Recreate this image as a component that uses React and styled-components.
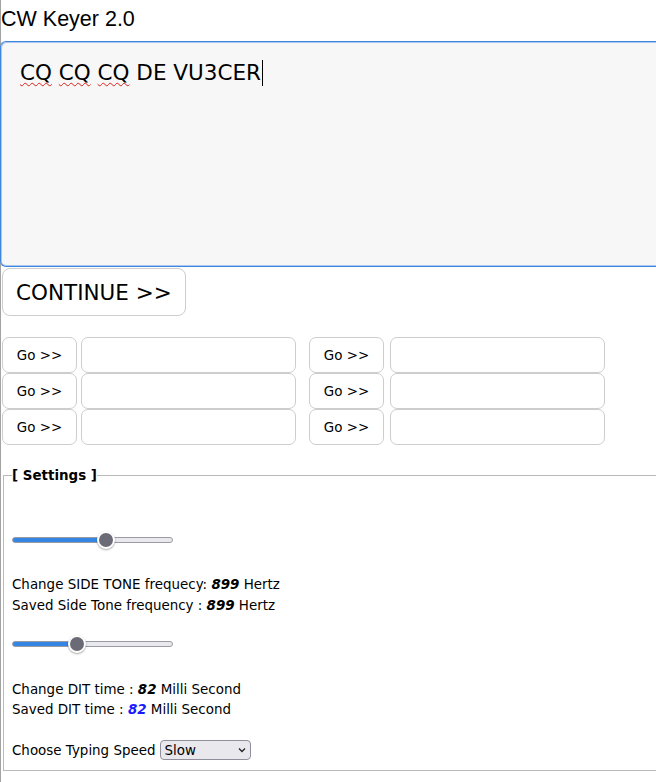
import React from "react";
import styled, { createGlobalStyle } from "styled-components";

const GlobalStyle = createGlobalStyle`
  html, body { margin: 0; padding: 0; background: #fff; overflow: hidden; }
  body { font-family: "DejaVu Sans", Verdana, sans-serif; color: #000; }
`;

const Page = styled.div`
  width: 656px;
  min-height: 782px;
  border-left: 1px solid #a3a3a3;
  box-sizing: border-box;
`;

const Title = styled.div`
  font-family: "Liberation Sans", Arial, sans-serif;
  font-size: 21.5px;
  line-height: 24px;
  padding-top: 7px;
  margin-bottom: 10px;
`;

const Editor = styled.div`
  margin-left: -1px;
  width: 656px;
  height: 226px;
  box-sizing: border-box;
  padding: 18px 0 18px 19px;
  background: #f7f7f7;
  border: 1px solid #3f86dc;
  border-right: none;
  box-shadow: inset 1px 1px 0 0 #a8c8f0, inset 0 -1px 0 0 #a8c8f0;
  border-radius: 6px 0 0 6px;
  font-size: 21.5px;
  line-height: normal;
`;

const Misspelled = styled.span`
  text-decoration: underline wavy #e0201a;
  text-decoration-thickness: 1px;
  text-underline-offset: 2px;
  text-decoration-skip-ink: none;
`;

const Caret = styled.span`
  display: inline-block;
  width: 1px;
  height: 26px;
  background: #000;
  vertical-align: -6px;
  margin-left: 1px;
`;

const ContinueButton = styled.button`
  display: block;
  margin: 1px 0 0 1px;
  height: 48px;
  padding: 0 13px;
  background: #fff;
  border: 1px solid #cdcdcd;
  border-radius: 8px;
  font-family: "DejaVu Sans", Verdana, sans-serif;
  font-size: 21.5px;
  color: #000;
`;

const MacroList = styled.div`
  margin: 21px 0 0 1px;
  display: flex;
  flex-direction: column;
`;

const MacroRow = styled.div`
  display: flex;
  gap: 13px;
  height: 36px;
`;

const MacroPair = styled.div`
  display: flex;
  gap: ${(p) => p.$gap}px;
`;

const GoButton = styled.button`
  width: 75px;
  height: 36px;
  padding: 0;
  background: #fff;
  border: 1px solid #cdcdcd;
  border-radius: 7px;
  font-family: "DejaVu Sans", Verdana, sans-serif;
  font-size: 13.43px;
  color: #000;
`;

const MacroInput = styled.input`
  width: 215px;
  height: 36px;
  box-sizing: border-box;
  border: 1px solid #cdcdcd;
  border-radius: 7px;
  background: #fff;
  padding: 0 6px;
  font-family: "DejaVu Sans", Verdana, sans-serif;
  font-size: 13.43px;
  outline: none;
`;

const Settings = styled.fieldset`
  margin: 23px 0 0 2px;
  width: 653px;
  min-width: 0;
  box-sizing: border-box;
  border: 1px solid #b9b9b9;
  border-right: none;
  padding: 0 0 10px 8px;
  font-size: 13.43px;
`;

const Legend = styled.legend`
  padding: 0;
  font-weight: bold;
  font-size: 13.43px;
  line-height: normal;
`;

const Range = styled.input.attrs({ type: "range" })`
  -webkit-appearance: none;
  appearance: none;
  display: block;
  width: 161px;
  height: 18px;
  margin: ${(p) => p.$mt}px 0 0 0;
  padding: 0;
  background: transparent;

  &::-webkit-slider-runnable-track {
    height: 6px;
    border-radius: 3px;
    box-sizing: border-box;
    border: 1px solid #9a9aa6;
    background: linear-gradient(
      to right,
      #3585e5 0,
      #3585e5 var(--fill),
      #e9e9ed var(--fill),
      #e9e9ed 100%
    );
  }
  &::-webkit-slider-thumb {
    -webkit-appearance: none;
    appearance: none;
    width: 18px;
    height: 18px;
    margin-top: -7px;
    border-radius: 50%;
    box-sizing: border-box;
    background: #6b6b77;
    border: 2px solid #fff;
    box-shadow: 0 1px 2px rgba(0, 0, 0, 0.35);
  }
`;

const InfoBlock = styled.div`
  margin-top: ${(p) => p.$mt}px;
  line-height: ${(p) => p.$lh}px;
`;

const Value = styled.b`
  font-style: italic;
  color: ${(p) => p.$color || "#000"};
`;

const SpeedRow = styled.div`
  margin-top: 20px;
  display: flex;
  align-items: center;
  gap: 4px;
  height: 20px;
`;

const SelectWrap = styled.div`
  position: relative;
  display: inline-block;
`;

const Select = styled.select`
  -webkit-appearance: none;
  appearance: none;
  width: 91px;
  height: 20px;
  box-sizing: border-box;
  margin: 0;
  padding: 0 0 0 4px;
  background: #e9e9ed;
  border: 1px solid #8f8f9d;
  border-radius: 4px;
  font-family: "DejaVu Sans", Verdana, sans-serif;
  font-size: 13.43px;
  color: #000;
`;

const Chevron = styled.svg`
  position: absolute;
  right: 5px;
  top: 7px;
  pointer-events: none;
`;

function Slider({ min, max, value, mt }) {
  const thumb = 18;
  const width = 161;
  const frac = (value - min) / (max - min);
  const px = thumb / 2 + frac * (width - thumb);
  return (
    <Range
      $mt={mt}
      min={min}
      max={max}
      defaultValue={value}
      style={{ "--fill": `${px}px` }}
    />
  );
}

const macros = [0, 1, 2];

export default function App() {
  return (
    <>
      <GlobalStyle />
      <Page>
        <Title>CW Keyer 2.0</Title>
        <Editor role="textbox">
          <Misspelled>CQ</Misspelled> <Misspelled>CQ</Misspelled>{" "}
          <Misspelled>CQ</Misspelled> DE VU3CER
          <Caret />
        </Editor>
        <ContinueButton>CONTINUE &gt;&gt;</ContinueButton>
        <MacroList>
          {macros.map((i) => (
            <MacroRow key={i}>
              <MacroPair $gap={4}>
                <GoButton>Go &gt;&gt;</GoButton>
                <MacroInput />
              </MacroPair>
              <MacroPair $gap={6}>
                <GoButton>Go &gt;&gt;</GoButton>
                <MacroInput />
              </MacroPair>
            </MacroRow>
          ))}
        </MacroList>
        <Settings>
          <Legend>[ Settings ]</Legend>
          <Slider min={200} max={1380} value={899} mt={48} />
          <InfoBlock $mt={25} $lh={21}>
            Change SIDE TONE frequecy: <Value>899</Value> Hertz
            <br />
            Saved Side Tone frequency : <Value>899</Value> Hertz
          </InfoBlock>
          <Slider min={20} max={180} value={82} mt={19} />
          <InfoBlock $mt={27} $lh={20}>
            Change DIT time : <Value>82</Value> Milli Second
            <br />
            Saved DIT time : <Value $color="#1a1aff">82</Value> Milli Second
          </InfoBlock>
          <SpeedRow>
            <span>Choose Typing Speed</span>
            <SelectWrap>
              <Select defaultValue="slow">
                <option value="slow">Slow</option>
                <option value="medium">Medium</option>
                <option value="fast">Fast</option>
              </Select>
              <Chevron width="8" height="6" viewBox="0 0 8 6">
                <path d="M1 1.5 L4 4.5 L7 1.5" fill="none" stroke="#222" strokeWidth="1.3" />
              </Chevron>
            </SelectWrap>
          </SpeedRow>
        </Settings>
      </Page>
    </>
  );
}
